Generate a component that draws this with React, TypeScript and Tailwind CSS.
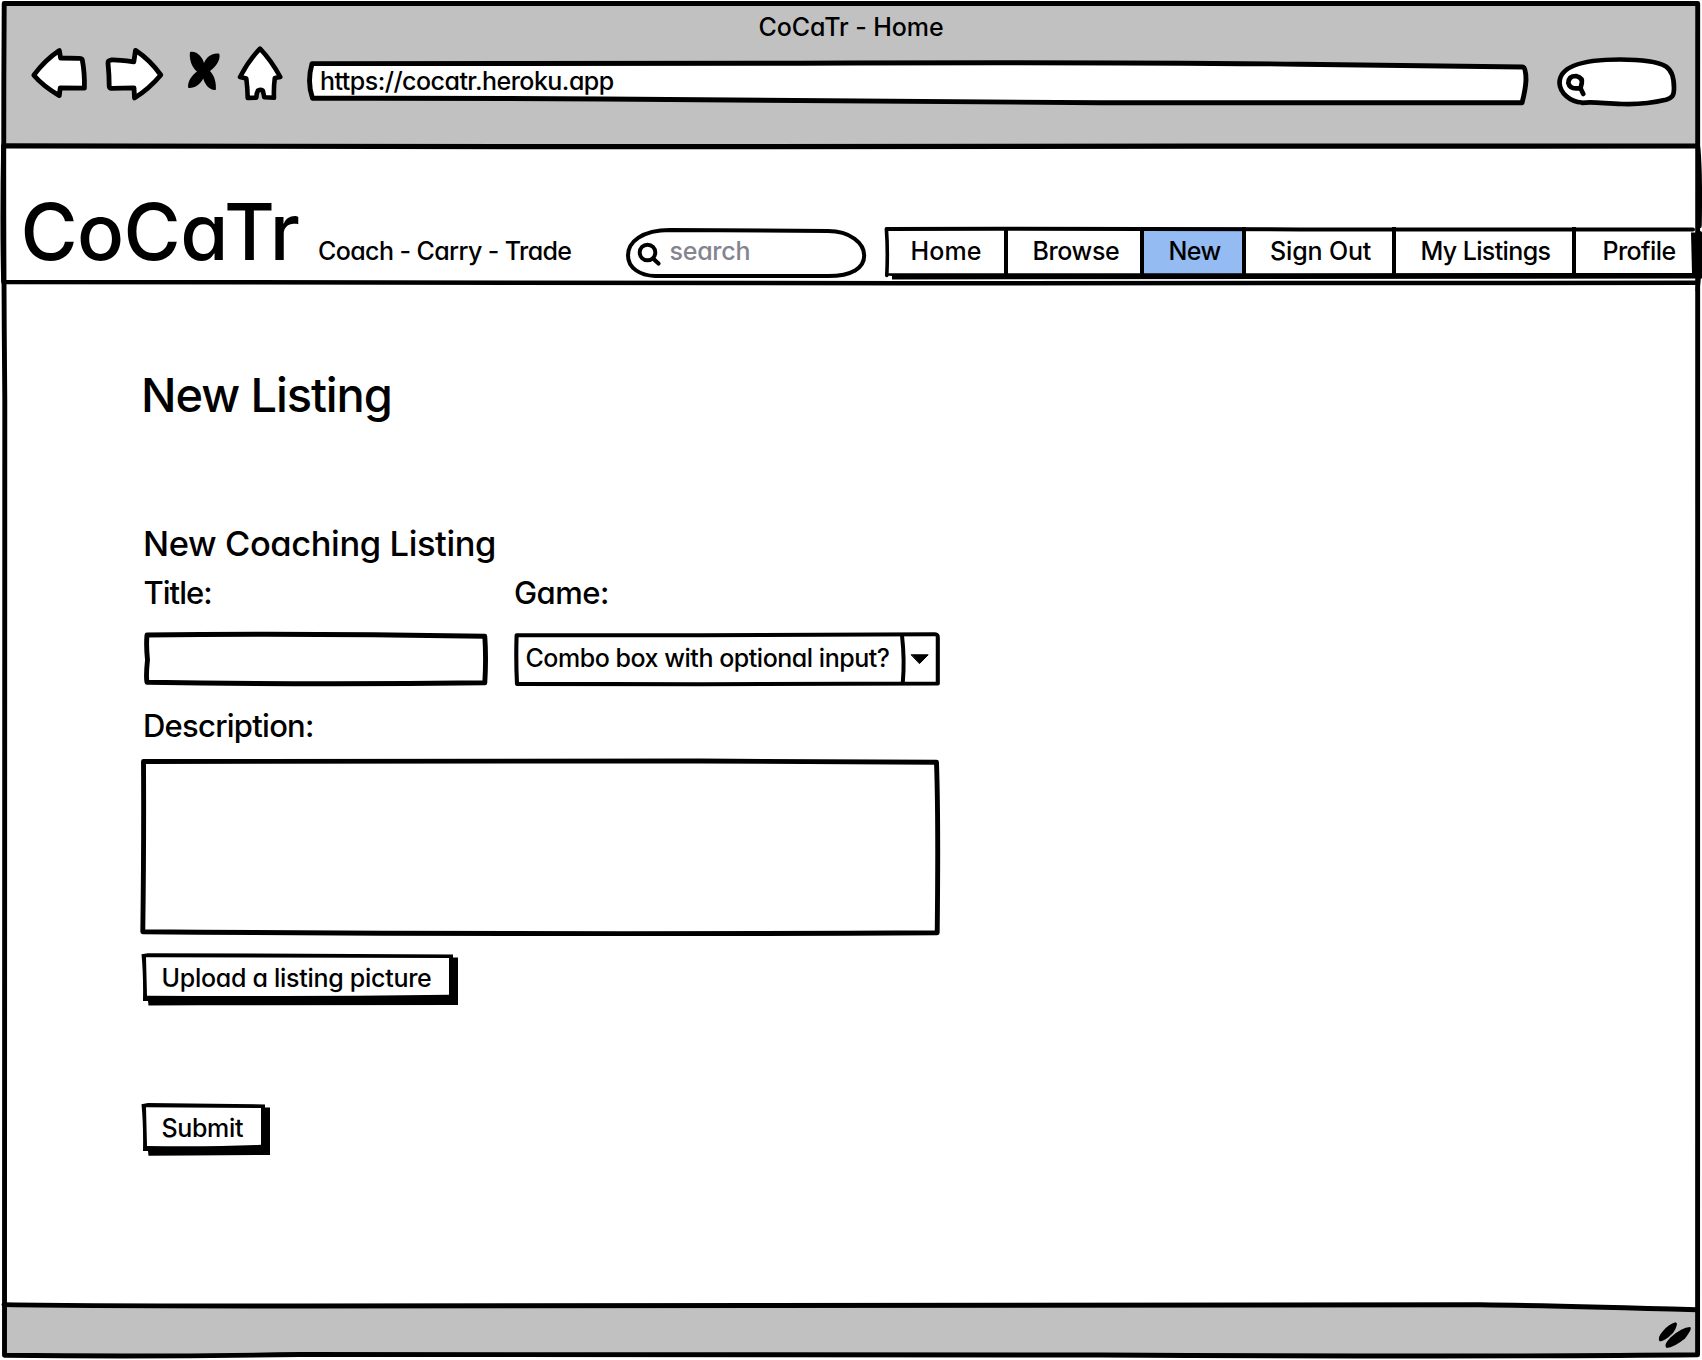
import type { ReactNode } from "react";
import clsx from "clsx";

/* Hand-drawn artwork stretched over its parent box; the view box is in page units. */
function Sketch({ view, className, children }: { view: string; className?: string; children: ReactNode }) {
  return (
    <svg
      viewBox={view}
      aria-hidden="true"
      fill="none"
      stroke="#000"
      strokeLinejoin="round"
      strokeLinecap="round"
      className={clsx("pointer-events-none overflow-visible", className)}
    >
      {children}
    </svg>
  );
}

const overlay = "absolute inset-0 size-full";

function BrowserBar() {
  return (
    <header className="h-[146px] shrink-0 px-1 pt-[3px]">
      <div className="flex h-full flex-col bg-[#c1c1c1]">
        <h1 className="h-[43px] pt-[9px] text-center text-[25px] leading-[30px] tracking-[-0.08px]">CoCaTr - Home</h1>
        <div className="flex h-[62px] pl-[26px]">
          <Sketch view="30 46 58 62" className="h-[62px] w-[58px] shrink-0">
            <path
              d="M59.300 50.500 Q45 60 33.800 75.200 Q43 86 59.300 95.600 L60.200 88 L84.400 88.200 Q84.800 73 82.300 60 Q82 58.300 79 58.400 L60.600 58 Z"
              fill="#fff"
              strokeWidth="4.800"
            />
          </Sketch>
          <Sketch view="104 46 60 62" className="ml-4 h-[62px] w-[60px] shrink-0">
            <path
              d="M108 63 Q107.800 60.500 111 60 Q115 59.500 133.800 61.800 L135.500 50.300 Q150 60 160.800 75 Q149 89 134.500 98 L134 87.800 L111.500 88.400 Q109.300 88.500 109.200 86 Q109.200 75 108 63 Z"
              fill="#fff"
              strokeWidth="4.800"
            />
          </Sketch>
          <Sketch view="186 46 36 62" className="ml-[22px] h-[62px] w-9 shrink-0">
            <path
              d="M190 52 C197 50.500 202.500 57.500 204 63 C207 56 213 52.500 219.300 53.800 C221 60.500 215 67.500 210 71 C214.500 76 216.500 83 215.800 90 C208.500 90.500 204.500 83 203.200 78.500 C200.500 84 195 88.500 188.300 88 C187 81.500 192 75.500 197 71.500 C191.500 67 189 59 190 52 Z"
              fill="#000"
              stroke="none"
            />
          </Sketch>
          <Sketch view="236 46 48 62" className="ml-3.5 h-[62px] w-12 shrink-0">
            <path
              d="M260 48.600 Q249 60 240 77 L246.300 78.500 Q247.600 88 247.700 98 L256.300 97.600 Q256.500 93 258 90.500 Q260.500 89.300 262.800 90.500 L264.300 97.300 L274 97.800 Q273.500 88 274.800 78 L280.300 77 Q271 60 260 48.600 Z"
              fill="#fff"
              strokeWidth="4.600"
            />
          </Sketch>
          <div className="relative ml-[22px] w-[1224px] pt-5 pl-[14px]">
            <Sketch view="306 46 1224 62" className={overlay}>
              <path
                d="M312 63.600 Q600 64.200 800 63.200 Q1100 62 1300 64.200 L1522.500 67 Q1526 67 1526 80 Q1525.500 90 1522 102.800 L1100 102.800 Q900 102 700 99.700 Q500 98 312.500 98.300 Q306.800 82 312 63.600 Z"
                fill="#fff"
                strokeWidth="4.900"
              />
            </Sketch>
            <span className="relative block text-[25px] leading-[30px] tracking-[-0.53px]">
              https://cocatr.heroku.app
            </span>
          </div>
          <Sketch view="1556 46 122 62" className="ml-[26px] h-[62px] w-[122px] shrink-0">
            <path
              d="M1582 102.500 C1570 102 1560 93 1559.500 83 C1559.500 67 1580 59.500 1620 59.500 C1642 59.500 1659 62.500 1666 66.500 C1673 71 1674 80 1674 88 C1674 96 1672 98 1666 99.800 C1648 104 1636 104.500 1622 104 C1604 103.500 1594 101.500 1582 102.800 Z"
              fill="#fff"
              strokeWidth="4.700"
            />
            <path
              d="M1580.500 88 Q1570 90 1568.300 83 Q1568.500 76 1576 76 Q1583 78 1581.800 83 L1580.500 88.300 L1583.300 94"
              strokeWidth="4.700"
            />
          </Sketch>
        </div>
      </div>
    </header>
  );
}

const links = [
  { label: "Home", cell: "w-[122px] pl-[24.500px] tracking-[0.1px]" },
  { label: "Browse", cell: "w-[136px] pl-[24.500px] tracking-[-0.4px]" },
  { label: "New", cell: "w-[102px] pl-[24.500px] tracking-[-0.6px] bg-[#95bbf3]" },
  { label: "Sign Out", cell: "w-[150px] pl-[24px] tracking-[-0.15px]" },
  { label: "My Listings", cell: "w-[180px] pl-[24.500px] tracking-[-0.62px]" },
  { label: "Profile", cell: "w-[124px] pl-[26.500px] tracking-[-0.6px]" },
];

function SiteHeader() {
  return (
    <section className="flex h-[136px] shrink-0 pl-[20.500px]">
      <div className="w-[297.500px] pt-[46.500px] text-[78px] leading-[78px] tracking-[-0.6px]">CoCaTr</div>
      <p className="w-[308px] pt-[90px] text-[25px] leading-[30px] tracking-[-0.6px]">Coach - Carry - Trade</p>
      <div className="relative mt-[80px] h-[53px] w-[240px] pt-2.5 pl-[43.500px]">
        <Sketch view="626 226 240 53" className={overlay}>
          <path
            d="M670 230 L828 231 C850 231 864.200 243 864.200 255.500 C864.200 268 852 276 828 276 L655 276 C640 275.500 628 268 628 255.500 C628 242 642 230 670 230 Z"
            fill="#fff"
            strokeWidth="4"
          />
          <circle cx="647.500" cy="252.500" r="7.800" strokeWidth="3.900" />
          <path d="M653 258.500 L658.500 263.500" strokeWidth="4.200" />
        </Sketch>
        <span className="relative block text-[25px] leading-[30px] tracking-[-0.25px] text-[#84848f]">search</span>
      </div>
      <nav className="relative mt-[81px] ml-[20px] flex h-[50px] text-[25px] leading-[30px]">
        {links.map(({ label, cell }) => (
          <a key={label} className={clsx("h-full shrink-0 border-r-4 border-black pt-[9px] last:border-r-0", cell)}>
            {label}
          </a>
        ))}
        <Sketch view="886 227 814 50" className={overlay}>
          <path d="M886.800 229 L1000 228.800 L1300 229.400 L1693 229.400" strokeWidth="4" />
          <path d="M886.400 229 Q888 250 886.800 275.500" strokeWidth="3.600" />
          <path
            d="M886.500 273.300 L1692 273 L1691 232.500 L1702 232.500 L1702 278.500 L892 279.500 L892 276 L886.500 275.500 Z"
            fill="#000"
            stroke="none"
          />
        </Sketch>
      </nav>
    </section>
  );
}

function SketchButton({ children, art, className }: { children: ReactNode; art: ReactNode; className: string }) {
  return (
    <button
      className={clsx(
        "relative flex h-[54px] items-start pt-[10.500px] pl-[20.500px] text-left text-[25px] leading-[30px]",
        className,
      )}
    >
      {art}
      <span className="relative">{children}</span>
    </button>
  );
}

function ListingForm() {
  return (
    <main className="h-[1023px] shrink-0 pl-[141px]">
      <h2 className="pt-[85px] text-[47px] leading-[56px] tracking-[-1.1px]">New Listing</h2>
      <h3 className="mt-[100px] pl-[2px] text-[34.500px] leading-[42px] tracking-[-0.4px]">New Coaching Listing</h3>
      <div className="mt-[8.500px] flex text-[31px] leading-[38px]">
        <label className="w-[373px] pl-[2.500px] tracking-[-1px]">Title:</label>
        <label className="tracking-[-0.55px]">Game:</label>
      </div>
      <div className="mt-[19.500px] flex h-[56px] pl-[2px]">
        <div className="relative w-[347px]">
          <Sketch view="143 631 347 56" className={overlay}>
            <path
              d="M147 635 Q300 633 484.800 636.300 Q486.300 658 484.800 682.800 Q315 685 147 682.300 Q145.800 676 147.500 660 Q146 645 147 635 Z"
              fill="#fff"
              strokeWidth="4.900"
            />
          </Sketch>
        </div>
        <div className="relative ml-[24px] w-[428px] pt-3 pl-[11.500px]">
          <Sketch view="514 631 428 56" className={overlay}>
            <path
              d="M516.600 635.200 L700 635.200 L935 634.200 Q938 634.200 937.800 638 L937.800 683.500 L700 684.200 L517 683.900 Q515.800 660 516.600 635.200 Z"
              fill="#fff"
              strokeWidth="4.100"
            />
            <path d="M902 635.500 Q904.800 660 902.800 682.500" strokeWidth="4" />
            <path d="M911.500 654.800 L928.200 654.800 L919.700 663.400 Z" fill="#000" strokeWidth="1" />
          </Sketch>
          <span className="relative block text-[25px] leading-[30px] tracking-[-0.47px]">
            Combo box with optional input?
          </span>
        </div>
      </div>
      <label className="mt-5 block pl-[2px] text-[31px] leading-[38px] tracking-[-0.75px]">Description:</label>
      <div className="relative mt-3 h-[180px] w-[800px]">
        <Sketch view="141 757 800 180" className={overlay}>
          <path
            d="M143.500 761.500 Q450 760 700 761 L936.500 762.300 Q938.500 820 937.200 932.800 Q540 934.800 142.800 931.700 Q144 840 143.500 761.500 Z"
            fill="#fff"
            strokeWidth="4.900"
          />
        </Sketch>
      </div>
      <SketchButton
        className="mt-[15px] w-[318px] tracking-[-0.28px]"
        art={
          <Sketch view="141 952 318 54" className={overlay}>
            <path
              d="M141.500 954.200 L148 953.200 L453 954.400 L453 957.400 L458 957.400 L458 1004.900 L200 1005.200 L148.500 1005.600 L148 1001 L143 1001 Q143.500 975 141.500 954.200 Z"
              fill="#000"
              stroke="none"
            />
            <path d="M146 957.300 L449 958.100 L449 994.800 Q320 996.500 147 995.800 Z" fill="#fff" stroke="none" />
          </Sketch>
        }
      >
        Upload a listing picture
      </SketchButton>
      <SketchButton
        className="mt-[96px] w-[130px] tracking-[-0.35px]"
        art={
          <Sketch view="141 1102 130 54" className={overlay}>
            <path
              d="M141.500 1104.200 L148 1103 L265 1104.400 L265 1107.400 L270 1107.400 L270 1154.900 L190 1155.400 L148.500 1155.800 L148 1151 L143 1151 Q143.500 1125 141.500 1104.200 Z"
              fill="#000"
              stroke="none"
            />
            <path d="M146 1107.300 L261 1108 L261 1144.700 Q210 1147 147 1146 Z" fill="#fff" stroke="none" />
          </Sketch>
        }
      >
        Submit
      </SketchButton>
    </main>
  );
}

function StatusBar() {
  return (
    <footer className="relative h-[55px] shrink-0">
      <Sketch view="0 1305 1702 55" className={overlay}>
        <path
          d="M4 1304.800 Q250 1306.500 700 1304.800 L1400 1304.800 Q1520 1305 1697 1309.500 L1697 1355.500 L4 1355 Z"
          fill="#c1c1c1"
          stroke="none"
        />
        <path d="M4 1304.600 Q100 1306 300 1306 Q900 1304 1480 1304.800 Q1560 1305.800 1697 1309.800" strokeWidth="4.900" />
        <path
          d="M1675.500 1322.300 Q1679.500 1323 1673 1333 Q1665 1341 1660 1341.500 Q1656.500 1338 1663 1331 Q1669 1324 1675.500 1322.300 Z"
          fill="#000"
          stroke="none"
        />
        <path
          d="M1690 1327 Q1693 1328 1685 1338.500 Q1674 1347.500 1666.500 1348 Q1663 1345 1670.500 1337.500 Q1682 1327 1690 1327 Z"
          fill="#000"
          stroke="none"
        />
      </Sketch>
    </footer>
  );
}

export default function App() {
  return (
    <div className="relative flex h-[1360px] w-[1702px] flex-col overflow-hidden bg-white font-['Inter',sans-serif] font-medium text-black [font-feature-settings:'cv11']">
      <BrowserBar />
      <SiteHeader />
      <ListingForm />
      <StatusBar />
      <Sketch view="0 0 1702 1360" className={overlay}>
        <path
          d="M4.200 3.500 L1697.700 3.500 L1697.600 1354.800 Q1500 1357 1100 1355 Q600 1353 300 1354.500 Q150 1357 4.500 1355.300 Q3.800 900 4.800 400 Q3 200 4.200 3.500 Z"
          strokeWidth="4.900"
        />
        <path d="M4 145.900 L600 146.700 L1200 146.200 L1697 146" strokeWidth="5.200" />
        <path
          d="M3.400 146 Q2 220 3.400 282 Q500 282.800 900 283.200 L1697 282.800 M1698 147 Q1700.500 170 1699.500 226"
          strokeWidth="4.500"
        />
        <path d="M1700 233 Q1700.500 270 1697.500 290" strokeWidth="4" />
      </Sketch>
    </div>
  );
}
